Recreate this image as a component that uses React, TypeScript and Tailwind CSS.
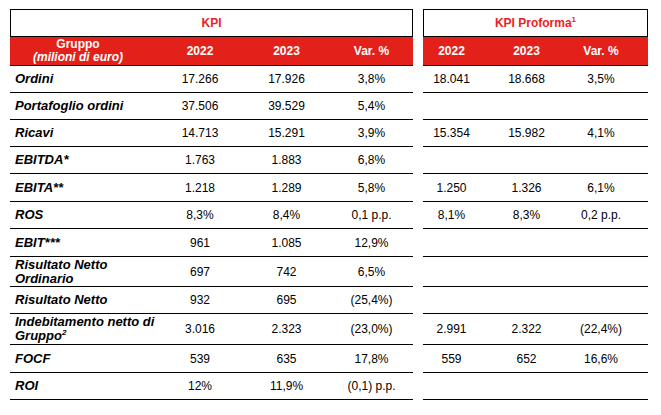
import React from 'react';

type Row = {
  label: React.ReactNode;
  kpi: [string, string, string];
  pro?: [string, string, string];
  h: string;
};

// altezze delle righe (bordo incluso)
const rows: Row[] = [
  { label: 'Ordini', kpi: ['17.266', '17.926', '3,8%'], pro: ['18.041', '18.668', '3,5%'], h: 'h-[27px]' },
  { label: 'Portafoglio ordini', kpi: ['37.506', '39.529', '5,4%'], h: 'h-[27px]' },
  { label: 'Ricavi', kpi: ['14.713', '15.291', '3,9%'], pro: ['15.354', '15.982', '4,1%'], h: 'h-[27px]' },
  { label: 'EBITDA*', kpi: ['1.763', '1.883', '6,8%'], h: 'h-[27px]' },
  { label: 'EBITA**', kpi: ['1.218', '1.289', '5,8%'], pro: ['1.250', '1.326', '6,1%'], h: 'h-[28px]' },
  { label: 'ROS', kpi: ['8,3%', '8,4%', '0,1 p.p.'], pro: ['8,1%', '8,3%', '0,2 p.p.'], h: 'h-[27px]' },
  { label: 'EBIT***', kpi: ['961', '1.085', '12,9%'], h: 'h-[28px]' },
  {
    label: (
      <>
        Risultato Netto
        <br />
        Ordinario
      </>
    ),
    kpi: ['697', '742', '6,5%'],
    h: 'h-[30px]',
  },
  { label: 'Risultato Netto', kpi: ['932', '695', '(25,4%)'], h: 'h-[27px]' },
  {
    label: (
      <>
        Indebitamento netto di
        <br />
        Gruppo<sup className="text-[8px] top-[-5px]">2</sup>
      </>
    ),
    kpi: ['3.016', '2.323', '(23,0%)'],
    pro: ['2.991', '2.322', '(22,4%)'],
    h: 'h-[31px]',
  },
  { label: 'FOCF', kpi: ['539', '635', '17,8%'], pro: ['559', '652', '16,6%'], h: 'h-[28px]' },
  { label: 'ROI', kpi: ['12%', '11,9%', '(0,1) p.p.'], h: 'h-[27px]' },
];

const LEFT_COLS = 'grid grid-cols-[147px_86px_87px_83px]';
const RIGHT_COLS = 'grid grid-cols-[57px_93px_56px_19px]';

export default function App() {
  return (
    <div className="w-[661px] h-[415px] bg-white pt-[9px] pl-[10px] text-black font-['Liberation_Sans',Arial,sans-serif]">
      {/* titoli */}
      <div className="flex gap-[10px]">
        <div className="w-[403px] h-[28px] border border-black flex items-center justify-center text-[12px] font-bold text-[#ee1c25]">
          KPI
        </div>
        <div className="w-[225px] h-[28px] border border-black flex items-center justify-center text-[12px] font-bold text-[#ee1c25]">
          <span>
            KPI Proforma<sup className="text-[8px] top-[-5px]">1</sup>
          </span>
        </div>
      </div>

      {/* intestazione rossa */}
      <div className="flex gap-[10px] text-[12px] font-bold text-white">
        <div className={`w-[403px] h-[29px] bg-[#e3211a] border-b border-black items-center ${LEFT_COLS}`}>
          <div className="flex flex-col items-center leading-[13px] pr-[11px]">
            <span>Gruppo</span>
            <span className="italic">(milioni di euro)</span>
          </div>
          <div className="text-center">2022</div>
          <div className="text-center">2023</div>
          <div className="text-center">Var. %</div>
        </div>
        <div className={`w-[225px] h-[29px] bg-[#e3211a] border-b border-black items-center ${RIGHT_COLS}`}>
          <div className="text-center">2022</div>
          <div className="text-center">2023</div>
          <div className="text-center">Var. %</div>
          <div />
        </div>
      </div>

      {/* righe */}
      {rows.map((r, i) => (
        <div key={i} className="flex gap-[10px] text-[12px]">
          <div className={`w-[403px] ${r.h} border-b border-black items-center ${LEFT_COLS}`}>
            <div className="pl-[5px] text-[13px] leading-[14px] font-bold italic">{r.label}</div>
            {r.kpi.map((v, j) => (
              <div key={j} className="text-center">
                {v}
              </div>
            ))}
          </div>
          <div className={`w-[225px] ${r.h} border-b border-black items-center ${RIGHT_COLS}`}>
            {r.pro ? (
              <>
                {r.pro.map((v, j) => (
                  <div key={j} className="text-center">
                    {v}
                  </div>
                ))}
                <div />
              </>
            ) : null}
          </div>
        </div>
      ))}
    </div>
  );
}
